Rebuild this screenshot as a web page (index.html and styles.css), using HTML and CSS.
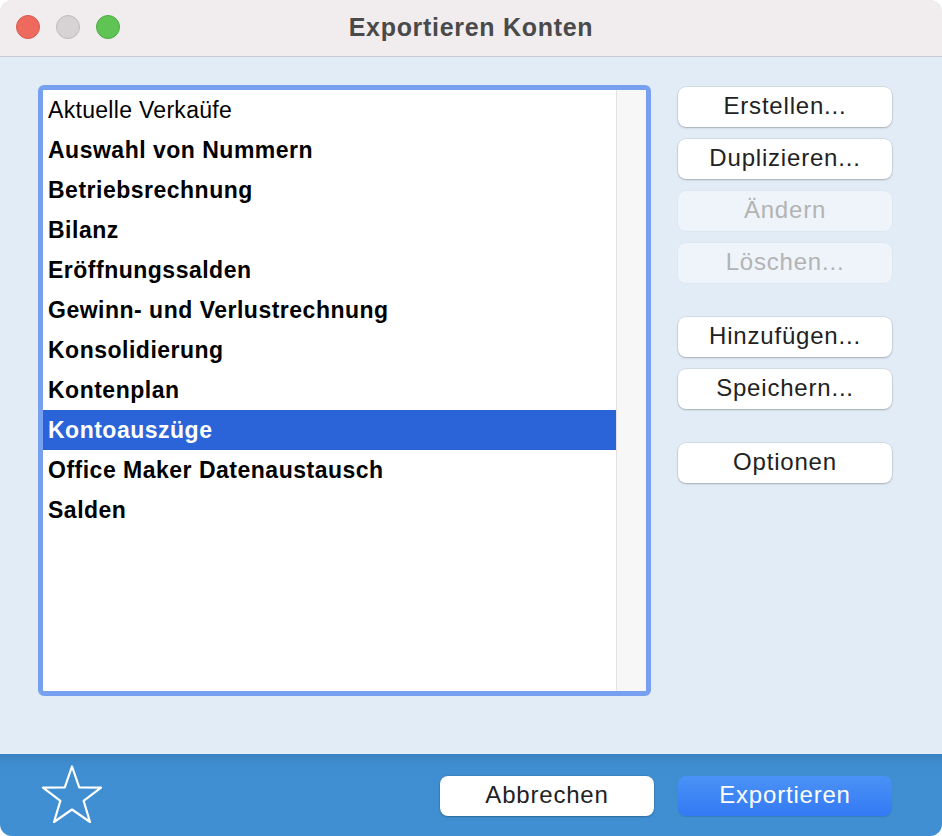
FILE: index.html
```html
<!DOCTYPE html>
<html lang="de">
<head>
<meta charset="utf-8">
<title>Exportieren Konten</title>
<link rel="stylesheet" href="styles.css">
</head>
<body>
<div class="window">
  <header class="titlebar">
    <div class="lights">
      <span class="light red"></span>
      <span class="light gray"></span>
      <span class="light green"></span>
    </div>
    <h1 class="title">Exportieren Konten</h1>
  </header>
  <main class="content">
    <div class="listbox">
      <ul class="rows">
        <li class="row normal">Aktuelle Verkaüfe</li>
        <li class="row">Auswahl von Nummern</li>
        <li class="row">Betriebsrechnung</li>
        <li class="row">Bilanz</li>
        <li class="row">Eröffnungssalden</li>
        <li class="row">Gewinn- und Verlustrechnung</li>
        <li class="row">Konsolidierung</li>
        <li class="row">Kontenplan</li>
        <li class="row selected">Kontoauszüge</li>
        <li class="row">Office Maker Datenaustausch</li>
        <li class="row">Salden</li>
      </ul>
      <div class="scrollbar"></div>
    </div>
    <div class="actions">
      <div class="group">
        <button class="btn">Erstellen...</button>
        <button class="btn">Duplizieren...</button>
        <button class="btn disabled">Ändern</button>
        <button class="btn disabled">Löschen...</button>
      </div>
      <div class="group">
        <button class="btn">Hinzufügen...</button>
        <button class="btn">Speichern...</button>
      </div>
      <div class="group">
        <button class="btn">Optionen</button>
      </div>
    </div>
  </main>
  <footer class="footer">
    <svg class="star" width="62" height="58" viewBox="0 0 62 58">
      <path d="M31 1.5 L38.2 22.3 L60 22.6 L42.6 35.8 L49 57 L31 44.5 L13 57 L19.4 35.8 L2 22.6 L23.8 22.3 Z" fill="none" stroke="#ffffff" stroke-width="2.2" stroke-linejoin="round"/>
    </svg>
    <div class="footer-buttons">
      <button class="btn">Abbrechen</button>
      <button class="btn primary">Exportieren</button>
    </div>
  </footer>
</div>
</body>
</html>
```

FILE: styles.css
```css
* { box-sizing: border-box; }
html, body { margin: 0; padding: 0; background: #ffffff; }
body { font-family: "Liberation Sans", Arial, sans-serif; }

.window {
  width: 942px;
  height: 836px;
  display: flex;
  flex-direction: column;
  border-radius: 12px;
  overflow: hidden;
  background: #e2ecf6;
}

.titlebar {
  height: 57px;
  flex: none;
  background: #f1edef;
  border-bottom: 1px solid #c9cdd3;
  position: relative;
  display: flex;
  align-items: center;
  justify-content: center;
}
.lights {
  position: absolute;
  left: 16px;
  top: 15px;
  display: flex;
  gap: 16px;
}
.light {
  width: 24px;
  height: 24px;
  border-radius: 50%;
  display: block;
}
.light.red { background: #ee6a5f; border: 1px solid #d8594e; }
.light.gray { background: #d7d3d4; border: 1px solid #bfbbbc; }
.light.green { background: #5fc454; border: 1px solid #4daa42; }
.title {
  margin: 0;
  font-size: 25px;
  font-weight: bold;
  color: #4a4a4a;
  letter-spacing: 0.7px;
  padding-bottom: 1px;
}

.content {
  flex: 1;
  display: flex;
  padding: 28px 50px 0 38px;
  gap: 27px;
}

.listbox {
  width: 613px;
  height: 611px;
  border: 5px solid #77a0f0;
  border-radius: 6px;
  background: #ffffff;
  display: flex;
}
.rows {
  list-style: none;
  margin: 0;
  padding: 0;
  width: 573px;
}
.row {
  height: 40px;
  line-height: 40px;
  padding-left: 5px;
  font-size: 23px;
  letter-spacing: 0.5px;
  font-weight: bold;
  color: #000000;
  white-space: nowrap;
}
.row.normal { font-weight: normal; letter-spacing: 0.3px; }
.row.selected { background: #2a64d8; color: #ffffff; }
.scrollbar {
  flex: 1;
  background: #f7f7f7;
  border-left: 1px solid #e3e3e3;
}

.actions {
  width: 214px;
  padding-top: 2px;
  display: flex;
  flex-direction: column;
  gap: 34px;
}
.group {
  display: flex;
  flex-direction: column;
  gap: 12px;
}

.btn {
  width: 214px;
  height: 40px;
  border: none;
  border-radius: 8px;
  background: #ffffff;
  box-shadow: 0 0 0 0.5px rgba(0,0,0,0.12), 0 1px 2px rgba(0,0,0,0.22);
  font-family: "Liberation Sans", Arial, sans-serif;
  font-size: 24px;
  letter-spacing: 0.8px;
  color: #222222;
  padding: 0 0 3px;
}
.btn.disabled {
  background: #eef4fa;
  color: #b3b3b3;
  box-shadow: 0 0 0 0.5px rgba(0,0,0,0.04);
}
.btn.primary {
  background: linear-gradient(#4a92f6, #3479f4);
  color: #ffffff;
  box-shadow: 0 1px 1px rgba(0,0,0,0.12);
}

.footer {
  height: 82px;
  flex: none;
  background: linear-gradient(#3a83c3 0px, #3f8ed1 12px, #408fd2 100%);
  display: flex;
  align-items: flex-start;
  justify-content: space-between;
  padding: 22px 50px 0 41px;
}
.star {
  margin-top: -11px;
  display: block;
}
.footer-buttons {
  display: flex;
  gap: 24px;
}
```
